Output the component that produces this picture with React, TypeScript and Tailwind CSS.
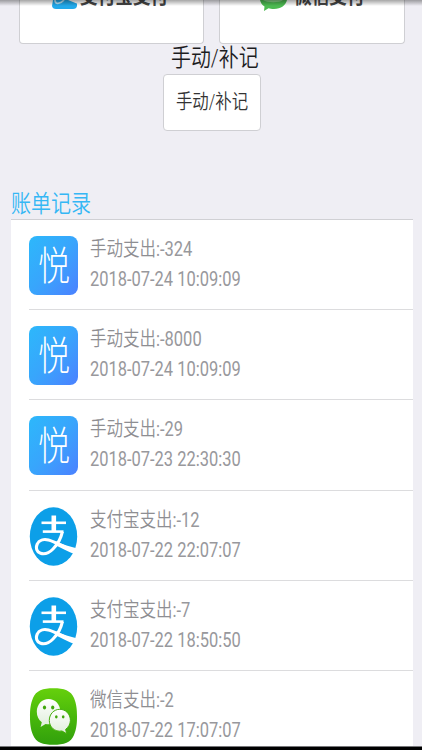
import React from "react";

const records = [
  { type: "manual", title: "手动支出", amount: ":-324", time: "2018-07-24 10:09:09" },
  { type: "manual", title: "手动支出", amount: ":-8000", time: "2018-07-24 10:09:09" },
  { type: "manual", title: "手动支出", amount: ":-29", time: "2018-07-23 22:30:30" },
  { type: "alipay", title: "支付宝支出", amount: ":-12", time: "2018-07-22 22:07:07" },
  { type: "alipay", title: "支付宝支出", amount: ":-7", time: "2018-07-22 18:50:50" },
  { type: "wechat", title: "微信支出", amount: ":-2", time: "2018-07-22 17:07:07" },
];

const ManualIcon = () => (
  <div className="flex h-[59px] w-[49px] items-center justify-center overflow-hidden rounded-[8px] bg-linear-to-br from-[#2cb8fb] via-[#38a5fc] to-[#4a80ff]">
    <span className="mt-[2px] block origin-center scale-x-[0.8] text-[40px] leading-[59px] font-light text-white">悦</span>
  </div>
);

const AlipayIcon = () => (
  <svg className="h-[59px] w-[49px]" viewBox="0 0 49 59" fill="none">
    <ellipse cx="24.5" cy="29.5" rx="23.7" ry="29.3" fill="#0c9fe8" />
    <path d="M24.8 8.5V25" stroke="#fff" strokeWidth="4.6" />
    <path d="M12.5 15.8H37" stroke="#fff" strokeWidth="2.6" />
    <path d="M13.8 24.6H34.5" stroke="#fff" strokeWidth="2.6" />
    <path
      d="M33.4 24.6C32 31 28.5 37.5 24 42C20 46 15.5 47.6 11.5 46.3C7.6 45 6.6 41 8.2 37.2C10 33.4 14.5 31.8 19.5 33.1C27 35.2 36 41 49 45"
      stroke="#fff"
      strokeWidth="3.1"
    />
    <path d="M27 34.5C34 37.5 41 39.6 48.5 41.5L46.5 47.6C39 44.8 32 41 26 38Z" fill="#fff" />
  </svg>
);

const WechatIcon = () => (
  <svg className="h-[59px] w-[49px]" viewBox="0 0 49 59">
    <defs>
      <linearGradient id="wxBg" x1="0" y1="0" x2="0" y2="1">
        <stop offset="0" stopColor="#66d00c" />
        <stop offset="0.5" stopColor="#48b80b" />
        <stop offset="1" stopColor="#319f0c" />
      </linearGradient>
      <linearGradient id="wxBubble" x1="0" y1="0" x2="0" y2="1">
        <stop offset="0" stopColor="#ffffff" />
        <stop offset="1" stopColor="#dfeeda" />
      </linearGradient>
    </defs>
    <path
      d="M24.5 1.2C35 1.2 42 3.5 45 11C47.4 17 48 22 48 29.5C48 37 47.4 42 45 48C42 55.5 35 57.8 24.5 57.8C14 57.8 7 55.5 4 48C1.6 42 1 37 1 29.5C1 22 1.6 17 4 11C7 3.5 14 1.2 24.5 1.2Z"
      fill="url(#wxBg)"
    />
    <path d="M19.5 12C13 12 7.8 17.4 7.8 24.7C7.8 29.2 9.6 32.7 12.8 35.2L11.6 40L16.6 36.9C25 39 31.4 32.7 31.4 24.7C31.4 17.4 26 12 19.5 12Z" fill="url(#wxBubble)" />
    <ellipse cx="15.5" cy="20.4" rx="1.6" ry="2" fill="#3fa60b" />
    <ellipse cx="23.7" cy="20.4" rx="1.6" ry="2" fill="#3fa60b" />
    <path
      d="M30.8 22.3C25 22.3 20.3 27 20.3 33.4C20.3 39.9 25.5 45.2 33 44L37.8 46.8L36.6 42.4C39.5 40.1 41.4 37 41.4 33.4C41.4 27 36.6 22.3 30.8 22.3Z"
      fill="url(#wxBubble)"
      stroke="#43ad0b"
      strokeWidth="1"
    />
    <ellipse cx="27.3" cy="29.8" rx="1.3" ry="1.6" fill="#3fa60b" />
    <ellipse cx="34.2" cy="29.8" rx="1.3" ry="1.6" fill="#3fa60b" />
  </svg>
);

const RecordIcon = ({ type }: { type: string }) => {
  if (type === "alipay") return <AlipayIcon />;
  if (type === "wechat") return <WechatIcon />;
  return <ManualIcon />;
};

const PayCards = () => (
  <div className="flex h-[44px] shrink-0 gap-[15px] pl-[19px]">
    <div className="flex h-[44px] w-[185px] items-start overflow-hidden rounded-b-[4px] border border-t-0 border-[#cfcfd3] bg-white pl-[31px]">
      <svg className="h-[10px] w-[27px] shrink-0" viewBox="0 0 27 10">
        <path d="M2 0H20L26 3V6Q25.5 9 22 9H5Q1.5 9 1 6Z" fill="#22a9ea" />
        <path d="M4 0C4 4.5 9 4.5 13 0" stroke="#b5e2f7" strokeWidth="1.8" fill="none" />
        <path d="M17 0L27 4V0Z" fill="#fff" />
      </svg>
      <span className="-mt-[15px] ml-[2px] block origin-left scale-x-[0.84] text-[21px] leading-[22px] font-bold whitespace-nowrap text-[#444]">支付宝支付</span>
    </div>
    <div className="flex h-[44px] w-[186px] items-start overflow-hidden rounded-b-[4px] border border-t-0 border-[#cfcfd3] bg-white pl-[39px]">
      <svg className="h-[12px] w-[30px] shrink-0" viewBox="0 0 30 12">
        <path d="M1 0H28C27 5 22 9 15 9C12.5 9 11 8.7 9.5 8.2L5 11L5.5 6.5C3 5 1.5 2.5 1 0Z" fill="#4cba51" />
        <path d="M4 0H24C21 3 8 3 4 0Z" fill="#86cf86" />
      </svg>
      <span className="-mt-[15px] ml-[5px] block origin-left scale-x-[0.84] text-[21px] leading-[22px] font-bold whitespace-nowrap text-[#444]">微信支付</span>
    </div>
  </div>
);

export default function App() {
  return (
    <div className="relative flex h-[750px] w-[422px] flex-col overflow-hidden bg-[#efeef4] font-[Roboto,'Noto_Sans_CJK_SC',sans-serif]">
      <PayCards />
      <div className="flex h-[30px] shrink-0 items-start justify-center pl-[7px]">
        <span className="scale-x-[0.83] text-[24px] leading-[28px] font-[350] whitespace-nowrap text-[#1c1c1e]">手动/补记</span>
      </div>
      <div className="ml-[163px] flex h-[57px] w-[98px] shrink-0 items-center justify-center rounded-[4px] border border-[#cfcfd3] bg-white">
        <span className="-mt-[2px] scale-x-[0.82] text-[20px] leading-[24px] font-[350] whitespace-nowrap text-[#333]">手动/补记</span>
      </div>
      <div className="mt-[58px] flex h-[30px] shrink-0 items-start pl-[11px]">
        <span className="origin-left scale-x-[0.835] text-[24px] leading-[30px] font-[350] whitespace-nowrap text-[#35b7f4]">账单记录</span>
      </div>
      <div className="mr-[9px] ml-[11px] flex h-[527px] shrink-0 flex-col overflow-hidden border-t border-[#d0d0d4] bg-white">
        {records.map((item, index) => (
          <div key={index} className="ml-[18px] flex h-[90.2px] shrink-0 items-start border-b border-[#dcdcde] pt-[16px]">
            <RecordIcon type={item.type} />
            <div className="ml-[12px] text-[20px] leading-[30px] font-[350] text-[#8e8e92]">
              <p className="-mt-[2px] origin-left scale-x-[0.825] whitespace-nowrap">
                {item.title}
                <span className="font-normal text-[#98989c]">{item.amount}</span>
              </p>
              <p className="origin-left scale-x-[0.823] font-normal whitespace-nowrap text-[#98989c]">{item.time}</p>
            </div>
          </div>
        ))}
      </div>
      <div className="h-[4px] shrink-0 border-t border-[#77777a] bg-black"></div>
      {/* header shadow over the scrolled content */}
      <div className="absolute inset-x-0 top-0 h-[6px] bg-linear-to-b from-black/35 to-transparent"></div>
    </div>
  );
}
